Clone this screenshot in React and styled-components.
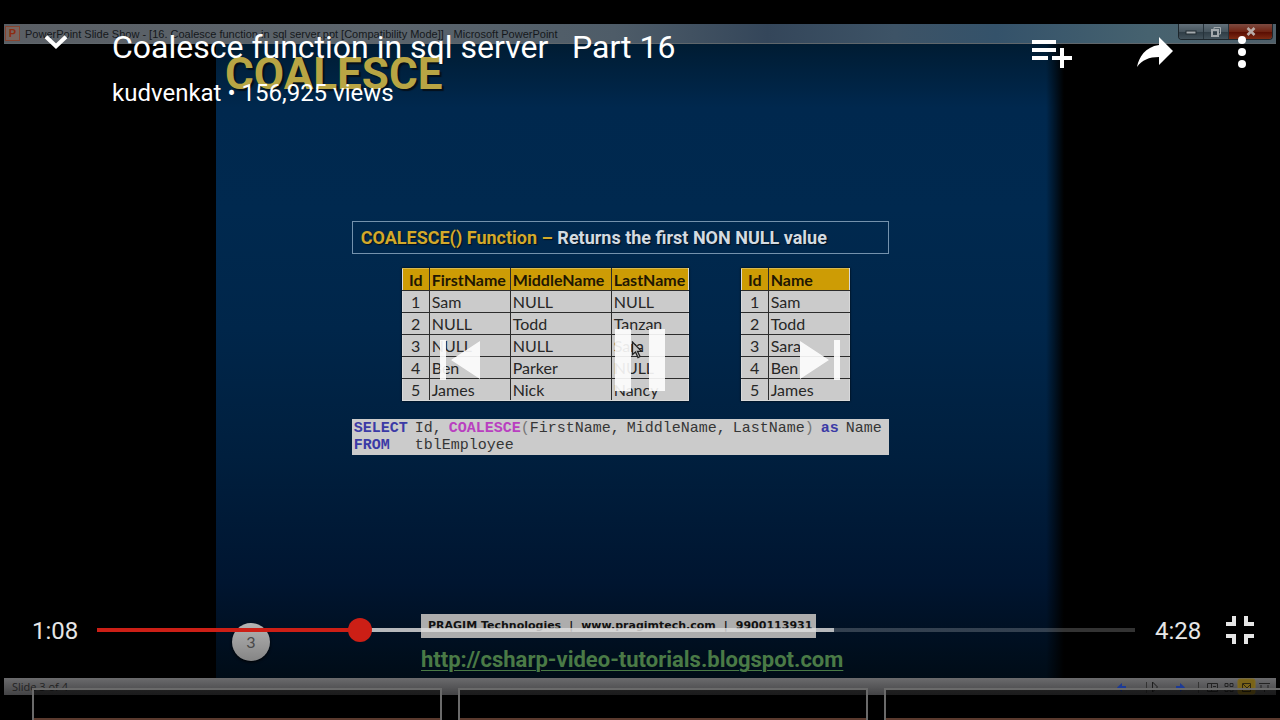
import React, { useState } from "react";
import styled, { createGlobalStyle } from "styled-components";

const GlobalStyle = createGlobalStyle`
  * { box-sizing: border-box; }
  html, body, #root { height: 100%; }
  body {
    margin: 0;
    background: #000;
    font-family: Roboto, sans-serif;
    overflow: hidden;
  }
  button {
    border: 0;
    padding: 0;
    background: none;
    color: inherit;
    font: inherit;
    display: flex;
    align-items: center;
    justify-content: center;
  }
  svg { display: block; }
`;

const Player = styled.main`
  position: relative;
  height: 100%;
  overflow: hidden;
  background: #000;
`;

/* ---------- recorded desktop ---------- */

const Recording = styled.div`
  height: 100%;
  padding: 24px 4px 25px;
  display: flex;
  flex-direction: column;
`;

const TitleBar = styled.div`
  flex: none;
  height: 20px;
  padding-left: 1px;
  display: flex;
  align-items: center;
  border-bottom: 1px solid #5f666b;
  background: linear-gradient(90deg, #5a5f65 0%, #5b646c 30%, #4e5c68 48%, #34465a 60%, #3d5366 70%, #34526a 78%, #46626f 90%, #50606a 100%);
`;

const AppBadge = styled.span`
  width: 15px;
  height: 15px;
  border: 1px solid #87442f;
  background: #77655f;
  color: #8c2c10;
  font: bold 11px/13px "Liberation Sans", sans-serif;
  text-align: center;
`;

const WindowTitle = styled.span`
  flex: 1;
  min-width: 0;
  margin-left: 5px;
  overflow: hidden;
  white-space: nowrap;
  color: #15181b;
  font: 11px/18px "Liberation Sans", sans-serif;
`;

const WindowButtons = styled.div`
  display: flex;
  align-self: flex-start;
  margin-right: 3px;
  border: 1px solid #1d262c;
  border-top: 0;
  border-radius: 0 0 4px 4px;
  overflow: hidden;
`;

const WindowButton = styled.button`
  && {
    width: ${(p) => (p.$close ? 43 : 25)}px;
    height: 15px;
    border-right: ${(p) => (p.$close ? "0" : "1px solid #26323a")};
    background: ${(p) =>
      p.$close
        ? "linear-gradient(#7c4a40, #6f2413 50%, #5a0e02 55%, #7d2a12)"
        : "linear-gradient(#62707a, #48565f 50%, #2f3d46 55%, #43525b)"};
  }
`;

const Slide = styled.section`
  flex: 1;
  min-height: 0;
  width: 66.6667%;
  margin: 0 auto;
  padding: 6px 0 0;
  display: flex;
  flex-direction: column;
  background:
    linear-gradient(90deg, transparent calc(100% - 18px), #000 100%),
    linear-gradient(#001c33 0%, #00284e 10%, #00294f 26%, #00264a 45%, #001f3e 65%, #001530 85%, #000c17 100%);
`;

const SlideHeading = styled.h1`
  margin: 0 0 123px;
  padding-left: 9px;
  color: #b8a544;
  font: bold 44px/48px Roboto, sans-serif;
  text-shadow: 2px 2px 1px #05101a;
`;

const SlideBody = styled.div`
  width: 537px;
  margin-left: 16%;
`;

const Definition = styled.p`
  margin: 0 0 14px;
  padding: 0 8px;
  border: 1px solid #7492ad;
  color: #d3dbe2;
  font: bold 18px/31px Roboto, sans-serif;
  white-space: nowrap;
  text-shadow: 1px 1px 1px #04101c;

  em {
    color: #d3a92b;
    font-style: normal;
  }
`;

const Tables = styled.div`
  display: flex;
  gap: 52px;
  margin: 0 0 18px 50px;
`;

const DataTable = styled.table`
  border-collapse: collapse;
  table-layout: fixed;
  width: ${(p) => p.$width}px;
  color: #272727;
  background: #cbcbcb;
  font: 16px/21px Lato, sans-serif;
  box-shadow: 0 0 2px #000;

  th, td {
    height: 22px;
    padding: 0 0 0 2px;
    border: 1px solid #2c2c2c;
    text-align: left;
    white-space: nowrap;
  }
  th {
    background: #cd9c05;
    color: #1f1703;
    font-weight: bold;
  }
  th:first-child, td:first-child {
    padding: 0;
    text-align: center;
    border-left-color: #d9d9d9;
  }
  th:last-child, td:last-child { border-right-color: #d9d9d9; }
  tr:last-child td { border-bottom-color: #d9d9d9; }
  thead th { border-top-color: #d9b84c; }
`;

const Pointer = styled.svg`
  position: absolute;
  left: 50%;
  top: 50%;
  margin: -19px 0 0 -9px;
`;

const Code = styled.div`
  height: 36px;
  padding: 1px 2px;
  background: #cbcbcb;
  color: #363636;
  font: 15px/17px "Liberation Mono", monospace;
`;

const CodeLine = styled.div`
  display: grid;
  grid-template-columns: 54px;
  grid-auto-columns: max-content;
  grid-auto-flow: column;
  column-gap: 7px;
`;

const Token = styled.span`
  font-weight: ${(p) => (p.$kind && p.$kind !== "mark" ? "bold" : "normal")};
  color: ${(p) => ({ keyword: "#3b3aa6", call: "#b93fc0", mark: "#777" })[p.$kind] || "inherit"};
`;

const SlideFooter = styled.footer`
  display: flex;
  gap: 151px;
  margin-top: auto;
  padding: 0 0 5px 16px;
`;

const PageNumber = styled.span`
  width: 38px;
  height: 38px;
  margin-top: 9px;
  border-radius: 50%;
  background: linear-gradient(#b4b4b4, #858585);
  color: #484848;
  font: 16px/38px Lato, sans-serif;
  text-align: center;
  box-shadow: 0 1px 3px #000;
`;

const Contact = styled.div`
  display: flex;
  flex-direction: column;
  align-items: flex-start;
  white-space: nowrap;
`;

const Banner = styled.div`
  display: flex;
  gap: 8px;
  min-width: 395px;
  height: 24px;
  padding-left: 7px;
  background: #adadad;
  color: #121212;
  font: bold 11px/24px "DejaVu Sans", sans-serif;
`;

const SiteLink = styled.a`
  margin-top: 8px;
  color: #4a7a46;
  font: bold 22px/27px Roboto, sans-serif;
  text-decoration: underline;
  text-decoration-thickness: 1px;
  text-underline-offset: 3px;
`;

const StatusBar = styled.div`
  flex: none;
  height: 17px;
  padding: 0 4px 0 8px;
  display: flex;
  align-items: center;
  justify-content: space-between;
  background: linear-gradient(#6b6b6d, #575759 50%, #434345);
  color: #222;
  font: 11px/20px "Open Sans", sans-serif;
`;

/* ---------- player controls ---------- */

const Overlay = styled.div`
  position: absolute;
  inset: 0;
  display: flex;
  flex-direction: column;
  color: #fff;
`;

const TopBar = styled.header`
  display: flex;
  align-items: flex-start;
  padding: 28px 34px 0 44px;
`;

const Titles = styled.div`
  flex: 1;
  margin-left: 44px;
`;

const VideoTitle = styled.h2`
  margin: 0 0 13px;
  font: 32px/38px Roboto, sans-serif;
  white-space: pre;
`;

const VideoMeta = styled.p`
  margin: 0;
  font: 24px/28px Roboto, sans-serif;
`;

const CollapseButton = styled.button`
  && { height: 28px; }
`;

const Actions = styled.div`
  display: flex;
  align-items: center;
  height: 48px;
  gap: 65px;
`;

const Transport = styled.div`
  position: absolute;
  inset: 0;
  display: flex;
  align-items: center;
  justify-content: center;
  gap: 135px;
  color: #fff;
  opacity: 0.9;
`;

const BottomBar = styled.div`
  position: relative;
  z-index: 1;
  display: flex;
  align-items: center;
  height: 56px;
  margin-top: auto;
  padding: 0 26px 0 32px;
  gap: 20px;
`;

const Time = styled.span`
  width: 45px;
  padding-top: 2px;
  color: #e6e6e6;
  font: 24px/28px Roboto, sans-serif;
`;

const FullscreenButton = styled.button`
  && { margin-left: 6px; color: #e6e6e6; }
`;

const SeekBar = styled.div`
  flex: 1;
  height: 4px;
  display: flex;
  align-items: center;
  background: linear-gradient(
    90deg,
    #cc1f16 ${(p) => p.$played}%,
    rgba(222, 222, 222, 0.82) ${(p) => p.$played}% ${(p) => p.$buffered}%,
    rgba(255, 255, 255, 0.2) ${(p) => p.$buffered}%
  );
`;

const SeekInput = styled.input`
  appearance: none;
  flex: 1;
  height: 24px;
  margin: 0 -12px;
  background: transparent;

  &::-webkit-slider-thumb {
    appearance: none;
    width: 24px;
    height: 24px;
    border-radius: 50%;
    background: #cc1f16;
  }
`;

const UpNext = styled.div`
  display: flex;
  gap: 16px;
  height: 32px;
  margin-top: 30px;
  padding-left: 32px;
  overflow: hidden;
`;

const UpNextCard = styled.div`
  flex: none;
  width: 410px;
  height: 232px;
  border: 2px solid #6a6a6a;
  background: linear-gradient(rgba(0, 0, 0, 0.6) 28px, #5b3a2e 28px);
`;

const employees = [
  ["1", "Sam", "NULL", "NULL"],
  ["2", "NULL", "Todd", "Tanzan"],
  ["3", "NULL", "NULL", "Sara"],
  ["4", "Ben", "Parker", "NULL"],
  ["5", "James", "Nick", "Nancy"],
];

const names = [
  ["1", "Sam"],
  ["2", "Todd"],
  ["3", "Sara"],
  ["4", "Ben"],
  ["5", "James"],
];

function Grid({ columns, rows, widths }) {
  return (
    <DataTable $width={widths.reduce((a, b) => a + b, 0)}>
      <colgroup>
        {widths.map((w, i) => (
          <col key={i} width={w} />
        ))}
      </colgroup>
      <thead>
        <tr>
          {columns.map((c) => (
            <th key={c} scope="col">{c}</th>
          ))}
        </tr>
      </thead>
      <tbody>
        {rows.map((row) => (
          <tr key={row[0]}>
            {row.map((cell, i) => (
              <td key={i}>{cell}</td>
            ))}
          </tr>
        ))}
      </tbody>
    </DataTable>
  );
}

function StatusIcons() {
  return (
    <svg width="156" height="17" viewBox="0 0 156 17" fill="none" stroke="#222" aria-hidden="true">
      <path d="M1 9.500l5-4.500v3h4v3H6v3z" fill="#1c3a96" stroke="none" />
      <path d="M30.500 4v11M82.500 4v11" stroke="#333" />
      <path d="M36.500 4v10l5-5z" stroke="#1c1c1c" />
      <path d="M69 9.500l-5-4.500v3h-4v3h4v3z" fill="#1c3a96" stroke="none" />
      <path d="M91.500 5.500h10v8h-10zM95.500 5.500v8M97 8.500h3" />
      <path d="M109 5.500h3v3h-3zM114 5.500h3v3h-3zM109 10.500h3v3h-3zM114 10.500h3v3h-3z" />
      <rect x="122" y="1" width="17" height="15" rx="2" fill="#7a6418" stroke="#806a20" />
      <path d="M126.500 5.500h8v8h-8zM127 6l4 4 4-4" stroke="#2c2610" />
      <path d="M143 5.500h11M145 7v4h7V7M148.500 11v3" />
    </svg>
  );
}

export default function App() {
  const duration = 268;
  const [position, setPosition] = useState(68);

  return (
    <>
      <GlobalStyle />
      <Player>
        <Recording>
          <TitleBar>
            <AppBadge>P</AppBadge>
            <WindowTitle>
              PowerPoint Slide Show - [16. Coalesce function in sql server.ppt [Compatibility Mode]] - Microsoft PowerPoint
            </WindowTitle>
            <WindowButtons>
              <WindowButton aria-label="Minimize">
                <svg width="12" height="6" viewBox="0 0 12 6"><rect x="1" y="2" width="10" height="3" fill="#a3a9ad" stroke="#222c33" /></svg>
              </WindowButton>
              <WindowButton aria-label="Restore">
                <svg width="12" height="12" viewBox="0 0 12 12" fill="none" stroke="#a3a9ad"><path d="M4 3V1.500h6.500V8H9" /><rect x="2" y="4" width="6" height="6" strokeWidth="2" /></svg>
              </WindowButton>
              <WindowButton $close aria-label="Close window">
                <svg width="10" height="9" viewBox="0 0 10 9" stroke="#b9aca8" strokeWidth="2.500"><path d="M1.500 1l7 7M8.500 1l-7 7" /></svg>
              </WindowButton>
            </WindowButtons>
          </TitleBar>

          <Slide>
            <SlideHeading>COALESCE</SlideHeading>
            <SlideBody>
              <Definition>
                <em>COALESCE() Function –</em> Returns the first NON NULL value
              </Definition>
              <Tables>
                <Grid columns={["Id", "FirstName", "MiddleName", "LastName"]} rows={employees} widths={[27, 81, 101, 77]} />
                <Grid columns={["Id", "Name"]} rows={names} widths={[27, 81]} />
              </Tables>
              <Code>
                <CodeLine>
                  <Token $kind="keyword">SELECT</Token>
                  <Token>Id,</Token>
                  <span>
                    <Token $kind="call">COALESCE</Token>
                    <Token $kind="mark">(</Token>FirstName,
                  </span>
                  <Token>MiddleName,</Token>
                  <span>LastName<Token $kind="mark">)</Token></span>
                  <Token $kind="keyword">as</Token>
                  <Token>Name</Token>
                </CodeLine>
                <CodeLine>
                  <Token $kind="keyword">FROM</Token>
                  <Token>tblEmployee</Token>
                </CodeLine>
              </Code>
            </SlideBody>
            <SlideFooter>
              <PageNumber>3</PageNumber>
              <Contact>
                <Banner>
                  <span>PRAGIM Technologies</span>
                  <span>|</span>
                  <span>www.pragimtech.com</span>
                  <span>|</span>
                  <span>9900113931</span>
                </Banner>
                <SiteLink href="http://csharp-video-tutorials.blogspot.com">
                  http://csharp-video-tutorials.blogspot.com
                </SiteLink>
              </Contact>
            </SlideFooter>
          </Slide>

          <StatusBar>
            <span>Slide 3 of 4</span>
            <StatusIcons />
          </StatusBar>
        </Recording>

        <Pointer width="13" height="18" viewBox="0 0 13 18" aria-hidden="true">
          <path d="M1.500 1v12.500l3-2.500 2.500 5.500 2-1-2.500-5.200h4z" fill="#c4c4c4" stroke="#222" strokeWidth="1.300" />
        </Pointer>

        <Transport>
          <button aria-label="Previous video">
            <svg width="40" height="40" viewBox="0 0 40 40" fill="currentColor"><path d="M0 0h6v40H0zM40 1v38L11 20z" /></svg>
          </button>
          <button aria-label="Pause">
            <svg width="50" height="62" viewBox="0 0 50 62" fill="currentColor"><path d="M0 0h16v62H0zM34 0h16v62H34z" /></svg>
          </button>
          <button aria-label="Next video">
            <svg width="40" height="40" viewBox="0 0 40 40" fill="currentColor"><path d="M34 0h6v40h-6zM0 1v38l29-19z" /></svg>
          </button>
        </Transport>

        <Overlay>
          <TopBar>
            <CollapseButton aria-label="Collapse player">
              <svg width="24" height="14" viewBox="0 0 24 14" fill="none" stroke="currentColor" strokeWidth="4"><path d="M2 1.800l10 9.400 10-9.400" /></svg>
            </CollapseButton>
            <Titles>
              <VideoTitle>{"Coalesce function in sql server   Part 16"}</VideoTitle>
              <VideoMeta>kudvenkat • 156,925 views</VideoMeta>
            </Titles>
            <Actions>
              <button aria-label="Add to playlist">
                <svg width="40" height="32" viewBox="0 -4 40 32" fill="currentColor"><path d="M0 0h24v4H0zM0 8h24v4H0zM0 16h16v4H0zM28 8h4v8h8v4h-8v8h-4v-8h-8v-4h8z" /></svg>
              </button>
              <button aria-label="Share">
                <svg width="36" height="30" viewBox="0 0 36 30" fill="currentColor"><path d="M22 0l14 14-14 14v-8C12 20 5 23 0 30 2 20 8 10 22 8z" /></svg>
              </button>
              <button aria-label="More options">
                <svg width="8" height="32" viewBox="0 0 8 32" fill="currentColor"><circle cx="4" cy="4" r="4" /><circle cx="4" cy="16" r="4" /><circle cx="4" cy="28" r="4" /></svg>
              </button>
            </Actions>
          </TopBar>

          <BottomBar>
            <Time>1:08</Time>
            <SeekBar $played={(position / duration) * 100} $buffered={71}>
              <SeekInput
                type="range"
                aria-label="Seek"
                min="0"
                max={duration}
                value={position}
                onChange={(e) => setPosition(Number(e.target.value))}
              />
            </SeekBar>
            <Time>4:28</Time>
            <FullscreenButton aria-label="Exit full screen">
              <svg width="28" height="28" viewBox="0 0 28 28" fill="currentColor"><path d="M6 0h4v10H0V6h6zM18 0h4v6h6v4H18zM0 18h10v10H6v-6H0zM18 18h10v4h-6v6h-4z" /></svg>
            </FullscreenButton>
          </BottomBar>

          <UpNext>
            <UpNextCard />
            <UpNextCard />
            <UpNextCard />
          </UpNext>
        </Overlay>
      </Player>
    </>
  );
}
